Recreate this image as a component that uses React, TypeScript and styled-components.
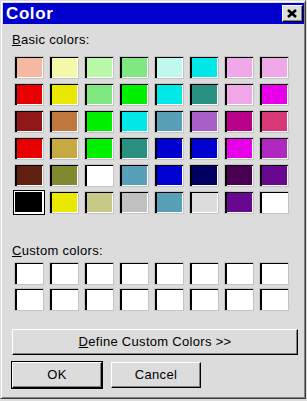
import React from "react";
import styled, { createGlobalStyle } from "styled-components";

const GlobalStyle = createGlobalStyle`
  html, body {
    margin: 0;
    padding: 0;
    background: #dcdcdc;
  }
  body {
    font-family: "Liberation Sans", Arial, sans-serif;
    color: #000;
  }
`;

const basicColors = [
  "#f5b8a0", "#f5f8a8", "#b8f8a8", "#80e880", "#c0f8f0", "#00e8e8", "#f0a8e8", "#f0a8e8",
  "#e80000", "#e8e800", "#80e880", "#00f000", "#00e8e8", "#289080", "#f0a8e8", "#e800e8",
  "#901818", "#c07840", "#00f000", "#00e8e8", "#58a0b8", "#a860c8", "#b80088", "#d83878",
  "#e80000", "#c8a840", "#00f000", "#289080", "#0000d0", "#0000d0", "#e800e8", "#b028c0",
  "#602010", "#808830", "#ffffff", "#58a0b8", "#0000d0", "#000060", "#480050", "#680890",
  "#000000", "#e8e800", "#c8c888", "#c0c0c0", "#58a0b8", "#dcdcdc", "#680890", "#ffffff",
];

const SELECTED = 40;

const Window = styled.div`
  box-sizing: border-box;
  width: 306px;
  height: 399px;
  background: #dcdcdc;
  border: 1px solid;
  border-color: #dcdcdc #404040 #404040 #dcdcdc;
  box-shadow: inset 1px 1px 0 #fff, inset -1px -1px 0 #808080;
  padding: 2px 1px 0 2px;
  display: flex;
  flex-direction: column;
`;

const TitleBar = styled.div`
  height: 21px;
  background: #0000cc;
  display: flex;
  align-items: center;
  justify-content: space-between;
  padding: 0 1px 0 3px;
`;

const Title = styled.span`
  color: #fff;
  font-weight: 700;
  font-size: 17px;
  letter-spacing: 0.6px;
  line-height: 21px;
`;

const CloseButton = styled.button`
  box-sizing: border-box;
  width: 21px;
  height: 17px;
  padding: 0 1px 1px 0;
  background: #dcdcdc;
  border: 1px solid;
  border-color: #fff #000 #000 #fff;
  box-shadow: inset -1px -1px 0 #808080;
  display: flex;
  align-items: center;
  justify-content: center;
`;

const Body = styled.div`
  padding: 0 9px;
  display: flex;
  flex-direction: column;
`;

const Label = styled.div<{ $top: number }>`
  margin-top: ${(p) => p.$top}px;
  font-size: 13px;
  line-height: 15px;
  height: 15px;
  letter-spacing: 0.3px;
`;

const SwatchGrid = styled.div<{ $top: number; $rowGap: number }>`
  margin: ${(p) => p.$top}px 0 0 2px;
  display: grid;
  grid-template-columns: repeat(8, 30px);
  grid-auto-rows: 23px;
  column-gap: 5px;
  row-gap: ${(p) => p.$rowGap}px;
`;

const Swatch = styled.div<{ $color: string; $selected?: boolean }>`
  box-sizing: border-box;
  background: ${(p) => p.$color};
  border: 1px solid ${(p) => (p.$selected ? "#fff" : "#c4c4c4")};
  box-shadow: ${(p) =>
    p.$selected
      ? "0 0 0 1px #000, inset -1px -1px 0 #fff"
      : "inset 2px 1px 0 #000, inset -1px -1px 0 #fff"};
`;

const RaisedButton = styled.button<{ $default?: boolean }>`
  box-sizing: border-box;
  height: 26px;
  background: #dcdcdc;
  font-family: "Liberation Sans", Arial, sans-serif;
  font-size: 13px;
  letter-spacing: 0.3px;
  color: #000;
  padding: 0 0 1px;
  border: 1px solid;
  border-color: #fff #000 #000 #fff;
  box-shadow: ${(p) =>
    p.$default
      ? "0 0 0 1px #000, inset -1px -1px 0 #808080"
      : "inset -1px -1px 0 #808080"};
`;

const WideButton = styled(RaisedButton)`
  margin-top: 18px;
  width: 286px;
`;

const ButtonRow = styled.div`
  margin-top: 7px;
  display: flex;
  gap: 9px;
`;

const DialogButton = styled(RaisedButton)`
  width: 90px;
`;

const CloseIcon = () => (
  <svg width="10" height="9" viewBox="0 0 10 9">
    <path d="M1 1 L9 8 M9 1 L1 8" stroke="#000" strokeWidth="2.6" fill="none" />
  </svg>
);

const App: React.FC = () => {
  return (
    <>
      <GlobalStyle />
      <Window>
        <TitleBar>
          <Title>Color</Title>
          <CloseButton>
            <CloseIcon />
          </CloseButton>
        </TitleBar>
        <Body>
          <Label $top={8}>
            <u>B</u>asic colors:
          </Label>
          <SwatchGrid $top={9} $rowGap={4}>
            {basicColors.map((c, i) => (
              <Swatch key={"b" + i} $color={c} $selected={i === SELECTED} />
            ))}
          </SwatchGrid>
          <Label $top={29}>
            <u>C</u>ustom colors:
          </Label>
          <SwatchGrid $top={4} $rowGap={3}>
            {Array.from({ length: 16 }).map((_, i) => (
              <Swatch key={"c" + i} $color="#fff" />
            ))}
          </SwatchGrid>
          <WideButton>
            <u>D</u>efine Custom Colors &gt;&gt;
          </WideButton>
          <ButtonRow>
            <DialogButton $default>OK</DialogButton>
            <DialogButton>Cancel</DialogButton>
          </ButtonRow>
        </Body>
      </Window>
    </>
  );
};

export default App;
